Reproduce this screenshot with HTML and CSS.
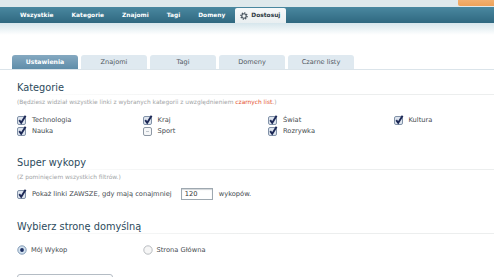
FILE: index.html
```html
<!DOCTYPE html>
<html lang="pl">
<head>
<meta charset="utf-8">
<title>Dostosuj</title>
<link rel="stylesheet" href="styles.css">
</head>
<body>
<header class="top">
  <div class="strip"><span class="login"></span></div>
  <nav class="nav">
    <a class="nav-item">Wszystkie</a>
    <a class="nav-item">Kategorie</a>
    <a class="nav-item">Znajomi</a>
    <a class="nav-item">Tagi</a>
    <a class="nav-item">Domeny</a>
    <a class="nav-item active">
      <svg class="gear" viewBox="0 0 8 8" width="8" height="8"><circle cx="4" cy="4" r="3.1" fill="none" stroke="#4a5660" stroke-width="1.4" stroke-dasharray="1.2 1.2"/><circle cx="4" cy="4" r="2.2" fill="none" stroke="#4a5660" stroke-width="1.1"/></svg>
      Dostosuj
    </a>
  </nav>
  <div class="fade"></div>
</header>

<main class="main">
  <div class="tabs">
    <span class="tab on">Ustawienia</span>
    <span class="tab">Znajomi</span>
    <span class="tab">Tagi</span>
    <span class="tab">Domeny</span>
    <span class="tab">Czarne listy</span>
  </div>

  <section class="sec">
    <h2 class="head">Kategorie</h2>
    <p class="desc">(Będziesz widział wszystkie linki z wybranych kategorii z uwzględnieniem <span class="red">czarnych list.</span>)</p>
    <div class="grid">
      <label class="opt"><svg class="cb" viewBox="0 0 10 10" width="10" height="10"><rect x="0.5" y="1.5" width="8" height="8" rx="1.5" fill="#dde4ee" stroke="#8292a8"/><path d="M2.2 5.2 L4.2 7.8 L8.6 0.8" stroke="#1c2856" stroke-width="1.9" fill="none"/></svg>Technologia</label>
      <label class="opt"><svg class="cb" viewBox="0 0 10 10" width="10" height="10"><rect x="0.5" y="1.5" width="8" height="8" rx="1.5" fill="#dde4ee" stroke="#8292a8"/><path d="M2.2 5.2 L4.2 7.8 L8.6 0.8" stroke="#1c2856" stroke-width="1.9" fill="none"/></svg>Kraj</label>
      <label class="opt"><svg class="cb" viewBox="0 0 10 10" width="10" height="10"><rect x="0.5" y="1.5" width="8" height="8" rx="1.5" fill="#dde4ee" stroke="#8292a8"/><path d="M2.2 5.2 L4.2 7.8 L8.6 0.8" stroke="#1c2856" stroke-width="1.9" fill="none"/></svg>Świat</label>
      <label class="opt"><svg class="cb" viewBox="0 0 10 10" width="10" height="10"><rect x="0.5" y="1.5" width="8" height="8" rx="1.5" fill="#dde4ee" stroke="#8292a8"/><path d="M2.2 5.2 L4.2 7.8 L8.6 0.8" stroke="#1c2856" stroke-width="1.9" fill="none"/></svg>Kultura</label>
      <label class="opt"><svg class="cb" viewBox="0 0 10 10" width="10" height="10"><rect x="0.5" y="1.5" width="8" height="8" rx="1.5" fill="#dde4ee" stroke="#8292a8"/><path d="M2.2 5.2 L4.2 7.8 L8.6 0.8" stroke="#1c2856" stroke-width="1.9" fill="none"/></svg>Nauka</label>
      <label class="opt"><svg class="cb" viewBox="0 0 10 10" width="10" height="10"><rect x="0.5" y="1.5" width="8" height="8" rx="1.5" fill="#f6f7f8" stroke="#8e98a4"/><path d="M3 5.5 H6" stroke="#b0b8c0" stroke-width="0.8"/></svg>Sport</label>
      <label class="opt"><svg class="cb" viewBox="0 0 10 10" width="10" height="10"><rect x="0.5" y="1.5" width="8" height="8" rx="1.5" fill="#dde4ee" stroke="#8292a8"/><path d="M2.2 5.2 L4.2 7.8 L8.6 0.8" stroke="#1c2856" stroke-width="1.9" fill="none"/></svg>Rozrywka</label>
    </div>
  </section>

  <section class="sec">
    <h2 class="head">Super wykopy</h2>
    <p class="desc">(Z pominięciem wszystkich filtrów.)</p>
    <div class="row">
      <label class="opt"><svg class="cb" viewBox="0 0 10 10" width="10" height="10"><rect x="0.5" y="1.5" width="8" height="8" rx="1.5" fill="#dde4ee" stroke="#8292a8"/><path d="M2.2 5.2 L4.2 7.8 L8.6 0.8" stroke="#1c2856" stroke-width="1.9" fill="none"/></svg>Pokaż linki ZAWSZE, gdy mają conajmniej</label>
      <span class="num">120</span>
      <span class="txt">wykopów.</span>
    </div>
  </section>

  <section class="sec">
    <h2 class="head">Wybierz stronę domyślną</h2>
    <div class="grid radios">
      <label class="opt"><svg class="rb" viewBox="0 0 10 10" width="10" height="10"><circle cx="5" cy="5" r="4.2" fill="#d4e2f0" stroke="#6a86a6" stroke-width="0.8"/><circle cx="5" cy="5" r="1.9" fill="#1c2f62"/></svg>Mój Wykop</label>
      <label class="opt"><svg class="rb" viewBox="0 0 10 10" width="10" height="10"><circle cx="5" cy="5" r="4.2" fill="#f6f6f6" stroke="#a8adb2" stroke-width="0.8"/></svg>Strona Główna</label>
    </div>
  </section>

  <div class="btn"></div>
</main>
</body>
</html>
```

FILE: styles.css
```css
html, body {
  margin: 0;
  padding: 0;
  overflow: hidden;
  background: #fff;
}
body {
  font-family: "DejaVu Sans", Verdana, sans-serif;
  color: #454a50;
  width: 520px;
}
.top {
  background: #dfe9ec;
}
.strip {
  height: 7px;
  display: flex;
  justify-content: flex-end;
  padding-right: 2px;
}
.login {
  width: 60px;
  height: 6px;
  background: linear-gradient(#f2b070, #eea25a);
  border-radius: 0 0 2px 2px;
}
.nav {
  height: 16px;
  background: linear-gradient(#4a88a0, #2f6880);
  display: flex;
  align-items: flex-end;
  padding-left: 11px;
}
.nav-item {
  color: #fff;
  font-weight: bold;
  font-size: 5.9px;
  line-height: 15px;
  padding: 0 9px;
  height: 15px;
}
.nav-item.active {
  background: linear-gradient(#f7f9fa, #e9eff1);
  color: #2e3a44;
  padding: 0 6px 0 5px;
  margin-left: 1px;
  border-radius: 2px 2px 0 0;
  display: flex;
  align-items: center;
  gap: 3px;
}
.gear {
  display: block;
}
.fade {
  height: 12px;
  background: linear-gradient(#d6e6ec, #fff);
}
.main {
  padding-top: 20px;
}
.tabs {
  display: flex;
  gap: 3px;
  padding-left: 12px;
  border-bottom: 1px solid #dbe4ea;
}
.tab {
  width: 66px;
  height: 14px;
  line-height: 14px;
  text-align: center;
  font-size: 6.6px;
  color: #50585f;
  background: #dfe9f0;
  border-radius: 3px 3px 0 0;
}
.tab.on {
  background: linear-gradient(#85a9c1, #5f8da9);
  color: #fff;
  font-weight: bold;
  font-size: 6.2px;
}
.sec {
  padding-left: 17px;
  margin-top: 12px;
}
.sec + .sec {
  margin-top: 20px;
}
.sec:last-of-type {
  margin-top: 21px;
}
.head {
  margin: 0;
  font-size: 9.8px;
  font-weight: normal;
  line-height: 12px;
  color: #2c4a5c;
  padding-bottom: 1px;
  background: linear-gradient(to right, rgba(236,239,239,0) 0%, #eceeee 45%, #eceeee 100%) no-repeat left bottom / 100% 1px;
}
.desc {
  margin: 3px 0 0;
  font-size: 5.9px;
  line-height: 8px;
  color: #a2a4a6;
}
.red {
  color: #e4532e;
}
.grid {
  display: grid;
  grid-template-columns: repeat(4, 125.5px);
  margin-top: 8px;
}
.radios {
  margin-top: 10px;
}
.opt {
  display: flex;
  align-items: center;
  font-size: 6.7px;
  height: 11.5px;
  color: #464b50;
}
.cb, .rb {
  display: block;
  margin-right: 5px;
  flex: none;
}
.rb {
  margin-right: 4px;
}
.row {
  display: flex;
  align-items: center;
  height: 12px;
  margin-top: 7px;
}
.num {
  width: 27px;
  height: 10px;
  border: 1px solid #9ea8b0;
  box-shadow: inset 0 1px 1px #d0d4d8;
  font-size: 6.7px;
  line-height: 10px;
  padding-left: 3px;
  margin-left: 9px;
  color: #333;
}
.txt {
  font-size: 6.7px;
  margin-left: 6px;
  color: #464b50;
}
.btn {
  margin: 18px 0 0 17px;
  width: 94px;
  height: 14px;
  border: 1px solid #b4bcc4;
  border-radius: 3px;
  background: linear-gradient(#fff, #eef1f3);
}
```
